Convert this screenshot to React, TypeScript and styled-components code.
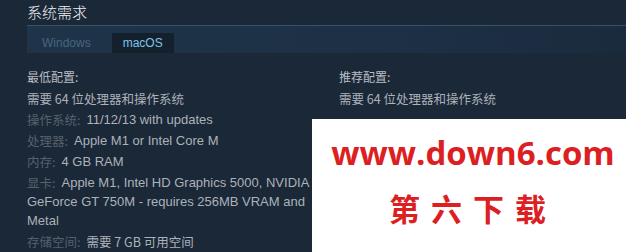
import React from "react";
import styled, { createGlobalStyle } from "styled-components";

const Global = createGlobalStyle`
  html, body { margin: 0; padding: 0; background: #1b2838; }
  body { width: 626px; height: 252px; overflow: hidden; font-family: "Liberation Sans", Arial, "Noto Sans CJK SC", sans-serif; }
`;

const Page = styled.div`
  position: relative;
  width: 626px;
  height: 252px;
  overflow: hidden;
  background: #1b2838;
  padding-left: 27px;
  box-sizing: border-box;
`;

const Title = styled.div`
  height: 25px;
  box-sizing: border-box;
  padding-top: 3px;
  font-size: 15px;
  line-height: 18px;
  color: #eef2f5;
  font-family: "Noto Sans CJK SC", sans-serif;
  font-weight: 300;
`;

const TabBar = styled.div`
  display: flex;
  align-items: flex-end;
  height: 28px;
  box-sizing: border-box;
  border-top: 1px solid #35536d;
  background: linear-gradient(90deg, #1f3448 0%, #1d3045 60%, #1b2b3e 100%);
  padding-left: 12px;
  gap: 18px;
`;

const Tab = styled.div<{ $active?: boolean }>`
  height: 20px;
  line-height: 20px;
  padding: 0 ${(p) => (p.$active ? "11px" : "3px")};
  font-size: 12px;
  color: ${(p) => (p.$active ? "#7fc3ee" : "#466580")};
  background: ${(p) => (p.$active ? "#15202d" : "transparent")};
`;

const Columns = styled.div`
  display: flex;
  padding-top: 14px;
`;

const Column = styled.div<{ $width?: number; $indent?: number }>`
  width: ${(p) => (p.$width ? `${p.$width}px` : "auto")};
  flex: ${(p) => (p.$width ? "none" : "1")};
  padding-left: ${(p) => p.$indent ?? 0}px;
  font-size: 13px;
  line-height: 19px;
  color: #acb2b8;
`;

const Cjk = styled.span`
  display: inline-block;
  vertical-align: top;
  font-family: "Noto Sans CJK SC", sans-serif;
  font-size: 12.5px;
  line-height: 19px;
  height: 19px;
`;

const Heading = styled(Cjk)`
  display: block;
  color: #b8bec4;
  margin-bottom: 3px;
  font-size: 12px;
`;

const Item = styled.div`
  margin-bottom: 2px;
`;

const Label = styled(Cjk)`
  color: #56616d;
  margin-right: 6px;
`;

const Watermark = styled.div`
  position: absolute;
  left: 312px;
  top: 119px;
  right: 0;
  bottom: 0;
  background: #ffffff;
  display: flex;
  flex-direction: column;
  align-items: center;
  padding-top: 16px;
  box-sizing: border-box;
  color: #dc1f23;
  font-weight: bold;
`;

const Url = styled.div`
  font-family: "Open Sans", "Liberation Sans", sans-serif;
  font-size: 33px;
  line-height: 36px;
  margin-left: 8px;
`;

const Brand = styled.div`
  font-family: "Noto Sans CJK SC", sans-serif;
  font-size: 31px;
  line-height: 40px;
  letter-spacing: 11px;
  margin-top: 17px;
  margin-left: 8px;
`;

export default function App() {
  return (
    <>
      <Global />
      <Page>
        <Title>系统需求</Title>
        <TabBar>
          <Tab>Windows</Tab>
          <Tab $active>macOS</Tab>
        </TabBar>
        <Columns>
          <Column $width={290}>
            <Heading>最低配置:</Heading>
            <Item><Cjk>需要 64 位处理器和操作系统</Cjk></Item>
            <Item><Label>操作系统:</Label>11/12/13 with updates</Item>
            <Item><Label>处理器:</Label>Apple M1 or Intel Core M</Item>
            <Item><Label>内存:</Label>4 GB RAM</Item>
            <Item><Label>显卡:</Label>Apple M1, Intel HD Graphics 5000, NVIDIA GeForce GT 750M - requires 256MB VRAM and Metal</Item>
            <Item><Label>存储空间:</Label><Cjk>需要 7 GB 可用空间</Cjk></Item>
          </Column>
          <Column $indent={22}>
            <Heading>推荐配置:</Heading>
            <Item><Cjk>需要 64 位处理器和操作系统</Cjk></Item>
          </Column>
        </Columns>
        <Watermark>
          <Url>www.down6.com</Url>
          <Brand>第六下载</Brand>
        </Watermark>
      </Page>
    </>
  );
}
